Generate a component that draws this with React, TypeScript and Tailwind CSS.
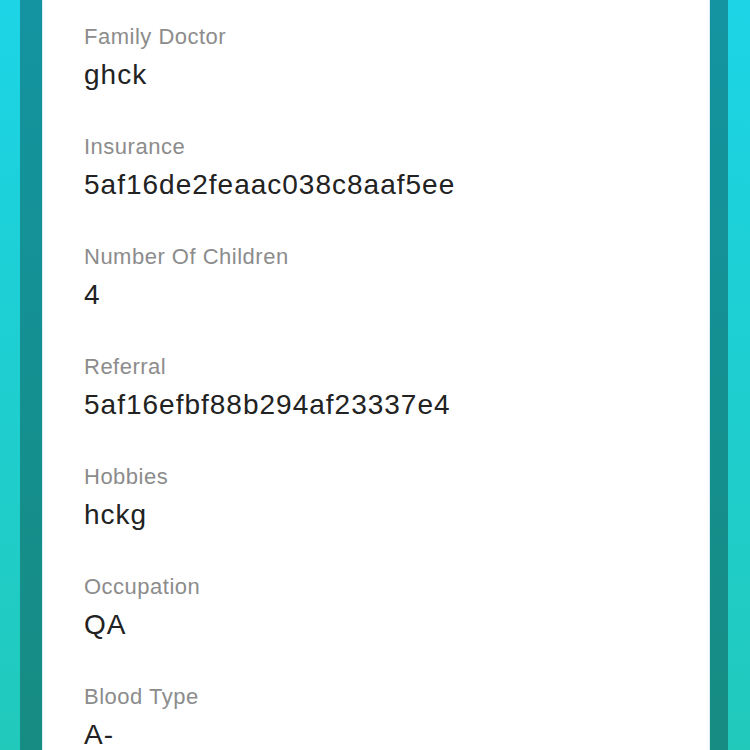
import React from "react";

const items: [string, string][] = [
  ["Family Doctor", "ghck"],
  ["Insurance", "5af16de2feaac038c8aaf5ee"],
  ["Number Of Children", "4"],
  ["Referral", "5af16efbf88b294af23337e4"],
  ["Hobbies", "hckg"],
  ["Occupation", "QA"],
  ["Blood Type", "A-"],
];

export default function App() {
  return (
    <div className="h-[750px] w-[750px] overflow-hidden bg-gradient-to-b from-[#1cd4e6] to-[#21c9bb] pl-[20px] pr-[22px]">
      <div className="flex h-full bg-black/30 pl-[22px] pr-[18px]">
        <div
          className="h-full flex-1 overflow-hidden border-x border-[#d4eef1] bg-white pl-[41px] pt-[24px]"
          style={{ fontFamily: '"Liberation Sans", Arial, sans-serif' }}
        >
          {items.map(([label, value]) => (
            <div key={label} className="pb-[42px]">
              <div className="h-[26px] text-[22px] leading-[26px] tracking-[0.5px] text-[#8c8c8c]">
                {label}
              </div>
              <div className="mt-[8px] h-[34px] text-[28px] leading-[34px] tracking-[1px] text-[#222222]">
                {value}
              </div>
            </div>
          ))}
        </div>
      </div>
    </div>
  );
}
